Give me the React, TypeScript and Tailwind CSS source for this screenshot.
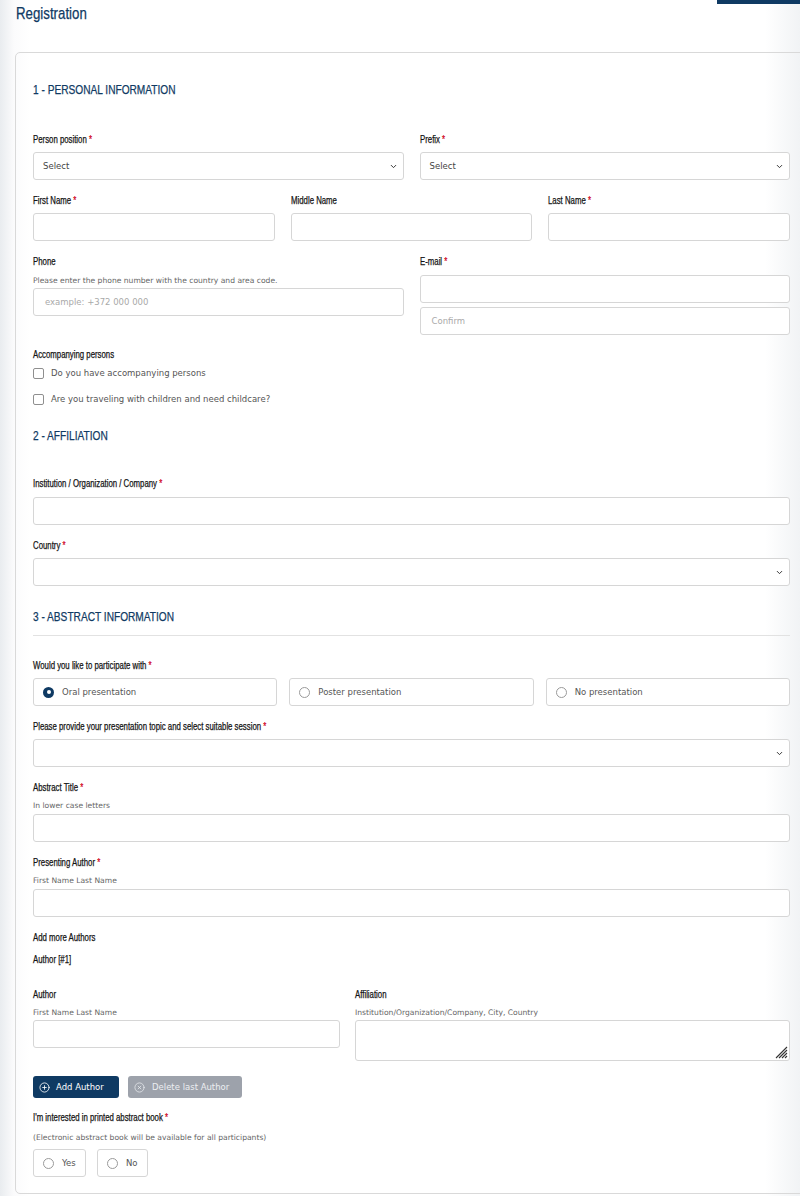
import {ChevronDown, CirclePlus, CircleX} from "lucide-react";

const cond = "font-['Liberation_Sans','Arial',sans-serif] block origin-left scale-x-[0.78] whitespace-nowrap [-webkit-text-stroke:0.25px_currentColor]";
const body = "font-['DejaVu_Sans','Open_Sans',sans-serif]";

const Label = ({text, required, className = ""}: {text: string; required?: boolean; className?: string}) => (
    <div className={`flex h-[14px] text-[10px] leading-[14px] text-[#141414] ${className}`}>
        <span className={cond}>
            {text}
            {required && <span className="text-[#d0021b]"> *</span>}
        </span>
    </div>
);

const Help = ({text, className = ""}: {text: string; className?: string}) => (
    <div className={`${body} text-[7.6px] leading-[10px] text-[#666] ${className}`}>{text}</div>
);

const Input = ({placeholder, className = ""}: {placeholder?: string; className?: string}) => (
    <div className={`h-[28px] border border-[#d6d6d6] rounded-[3px] bg-white flex items-center px-[11px] ${body} text-[8.5px] text-[#a9a9a9] ${className}`}>
        {placeholder}
    </div>
);

const Select = ({value, className = ""}: {value?: string; className?: string}) => (
    <div className={`h-[28px] border border-[#d6d6d6] rounded-[3px] bg-white flex items-center justify-between pl-[9px] pr-[5px] ${body} text-[8.5px] text-[#444] ${className}`}>
        <span>{value}</span>
        <ChevronDown size={9} strokeWidth={2.6} className="text-[#333]" />
    </div>
);

const Heading = ({text, className = ""}: {text: string; className?: string}) => (
    <div className={`flex h-[16px] text-[13px] leading-[16px] text-[#0f3a63] ${className}`}>
        <span className={`${cond} scale-x-[0.76]`}>{text}</span>
    </div>
);

const Radio = ({checked}: {checked?: boolean}) =>
    checked ? (
        <span className="w-[11px] h-[11px] rounded-full bg-[#0f3a63] flex items-center justify-center shrink-0">
            <span className="w-[4px] h-[4px] rounded-full bg-white" />
        </span>
    ) : (
        <span className="w-[11px] h-[11px] rounded-full border border-[#9a9a9a] bg-white shrink-0" />
    );

const RadioBox = ({text, checked, className = ""}: {text: string; checked?: boolean; className?: string}) => (
    <div className={`h-[28px] border border-[#d6d6d6] rounded-[3px] bg-white flex items-center gap-[8px] pl-[9px] ${body} text-[8.5px] text-[#555] ${className}`}>
        <Radio checked={checked} />
        <span>{text}</span>
    </div>
);

const Check = ({text, className = ""}: {text: string; className?: string}) => (
    <div className={`flex items-center gap-[7px] h-[14px] ${body} text-[8.5px] text-[#555] ${className}`}>
        <span className="w-[11px] h-[11px] rounded-[2px] border border-[#8f8f8f] bg-white shrink-0" />
        <span>{text}</span>
    </div>
);

const App = () => {
    return (
        <div className="w-[800px] h-[1196px] overflow-hidden bg-[linear-gradient(90deg,#e9ecef_0px,#fbfbfc_14px,#ffffff_30px,#ffffff_765px,#f1f3f5_800px)]">
            <div className="flex justify-end">
                <div className="w-[83px] h-[4px] bg-[#0f3a63]" />
            </div>
            <div className="flex h-[22px] text-[17px] leading-[22px] text-[#0f3a63] ml-[16px] mt-[-1px]">
                <span className={`${cond} scale-x-[0.77]`}>Registration</span>
            </div>

            <div className="ml-[15px] mt-[27px] w-[800px] border border-[#d9d9d9] rounded-[5px] pl-[17px] pr-[25px] pt-[29px] pb-[16px]">
                <div className="w-[757px]">
                    {/* 1 - personal */}
                    <Heading text="1 - PERSONAL INFORMATION" />

                    <div className="grid grid-cols-2 gap-x-[16px] mt-[35px]">
                        <div>
                            <Label text="Person position" required />
                            <Select value="Select" className="mt-[5px]" />
                        </div>
                        <div>
                            <Label text="Prefix" required />
                            <Select value="Select" className="mt-[5px]" />
                        </div>
                    </div>

                    <div className="grid grid-cols-3 gap-x-[16px] mt-[14px]">
                        <div>
                            <Label text="First Name" required />
                            <Input className="mt-[5px]" />
                        </div>
                        <div>
                            <Label text="Middle Name" />
                            <Input className="mt-[5px]" />
                        </div>
                        <div>
                            <Label text="Last Name" required />
                            <Input className="mt-[5px]" />
                        </div>
                    </div>

                    <div className="grid grid-cols-2 gap-x-[16px] mt-[14px]">
                        <div>
                            <Label text="Phone" />
                            <Help text="Please enter the phone number with the country and area code." className="mt-[7px]" />
                            <Input placeholder="example: +372 000 000" className="mt-[2px]" />
                        </div>
                        <div>
                            <Label text="E-mail" required />
                            <Input className="mt-[6px]" />
                            <Input placeholder="Confirm" className="mt-[4px]" />
                        </div>
                    </div>

                    <Label text="Accompanying persons" className="mt-[13px]" />
                    <Check text="Do you have accompanying persons" className="mt-[4px]" />
                    <Check text="Are you traveling with children and need childcare?" className="mt-[12px]" />

                    {/* 2 - affiliation */}
                    <Heading text="2 - AFFILIATION" className="mt-[22px]" />

                    <Label text="Institution / Organization / Company" required className="mt-[33px]" />
                    <Input className="mt-[6px]" />

                    <Label text="Country" required className="mt-[14px]" />
                    <Select className="mt-[5px]" />

                    {/* 3 - abstract */}
                    <Heading text="3 - ABSTRACT INFORMATION" className="mt-[23px]" />
                    <div className="h-px bg-[#e2e2e2] mt-[10px]" />

                    <Label text="Would you like to participate with" required className="mt-[23px]" />
                    <div className="grid grid-cols-3 gap-x-[12px] mt-[5px]">
                        <RadioBox text="Oral presentation" checked />
                        <RadioBox text="Poster presentation" />
                        <RadioBox text="No presentation" />
                    </div>

                    <Label text="Please provide your presentation topic and select suitable session" required className="mt-[14px]" />
                    <Select className="mt-[5px]" />

                    <Label text="Abstract Title" required className="mt-[14px]" />
                    <Help text="In lower case letters" className="mt-[6px]" />
                    <Input className="mt-[3px]" />

                    <Label text="Presenting Author" required className="mt-[14px]" />
                    <Help text="First Name Last Name" className="mt-[6px]" />
                    <Input className="mt-[3px]" />

                    <Label text="Add more Authors" className="mt-[14px]" />
                    <Label text="Author [#1]" className="mt-[8px]" />

                    <div className="grid grid-cols-[307px_1fr] gap-x-[15px] mt-[21px]">
                        <div>
                            <Label text="Author" />
                            <Help text="First Name Last Name" className="mt-[6px]" />
                            <Input className="mt-[2px]" />
                        </div>
                        <div>
                            <Label text="Affiliation" />
                            <Help text="Institution/Organization/Company, City, Country" className="mt-[6px]" />
                            <div className="relative mt-[2px]">
                                <textarea className="block w-full h-[41px] border border-[#d6d6d6] rounded-[3px] bg-white resize-none" />
                                <svg className="absolute right-[2px] bottom-[2px]" width="13" height="13" viewBox="0 0 13 13" fill="none" stroke="#333" strokeWidth="1.1">
                                    <path d="M1 12 L12 1 M4 12 L12 4 M7 12 L12 7 M10 12 L12 10" />
                                </svg>
                            </div>
                        </div>
                    </div>

                    <div className="flex gap-[9px] mt-[15px]">
                        <button className={`h-[22px] w-[86px] rounded-[3px] bg-[#0f3a63] text-white flex items-center gap-[6px] pl-[6px] ${body} text-[8.5px]`}>
                            <CirclePlus size={11} strokeWidth={1.8} />
                            <span>Add Author</span>
                        </button>
                        <button className={`h-[22px] w-[114px] rounded-[3px] bg-[#9da2ab] text-[#eceef1] flex items-center gap-[7px] pl-[6px] ${body} text-[8.5px]`}>
                            <CircleX size={11} strokeWidth={1.6} />
                            <span>Delete last Author</span>
                        </button>
                    </div>

                    <Label text="I'm interested in printed abstract book" required className="mt-[13px]" />
                    <Help text="(Electronic abstract book will be available for all participants)" className="mt-[8px]" />
                    <div className="flex gap-[11px] mt-[6px]">
                        <RadioBox text="Yes" className="w-[53px]" />
                        <RadioBox text="No" className="w-[51px]" />
                    </div>
                </div>
            </div>
        </div>
    );
};

export default App;
